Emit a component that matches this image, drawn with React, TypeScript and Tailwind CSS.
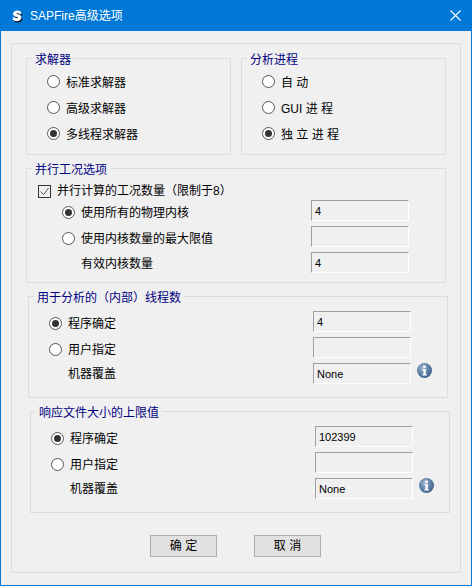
import { type ReactNode } from "react";

const Radio = ({ checked }: { checked?: boolean }) => (
  <span className="flex h-[13px] w-[13px] shrink-0 items-center justify-center rounded-full border border-[#555] bg-white">
    {checked && <span className="h-[7px] w-[7px] rounded-full bg-[#333]" />}
  </span>
);

const RadioRow = ({ label, checked, className }: { label: string; checked?: boolean; className: string }) => (
  <div className={`flex h-[21px] items-center gap-[6px] ${className}`}>
    <Radio checked={checked} />
    <span className="pt-[2px] whitespace-pre">{label}</span>
  </div>
);

const Field = ({ value }: { value?: string }) => (
  <div className="flex h-[21px] w-[98px] items-center border border-t-[#a0a0a0] border-l-[#a0a0a0] border-r-white border-b-white pl-[3px] text-[11px]">
    {value}
  </div>
);

const Group = ({ title, className, children }: { title: string; className: string; children: ReactNode }) => (
  <section className={`relative border border-[#dcdcdc] ${className}`}>
    <h2 className="absolute top-[-7px] left-[5px] bg-[#f0f0f0] px-[3px] text-[12px] leading-[16px] font-normal whitespace-nowrap text-[#000080]">
      {title}
    </h2>
    {children}
  </section>
);

const InfoIcon = () => (
  <svg width="15" height="15" viewBox="0 0 15 15" className="-mt-[6px] ml-[6px] shrink-0">
    <defs>
      <radialGradient id="info" cx="40%" cy="35%" r="70%">
        <stop offset="0%" stopColor="#a5b8cf" />
        <stop offset="55%" stopColor="#5f80a6" />
        <stop offset="100%" stopColor="#3d5f88" />
      </radialGradient>
    </defs>
    <circle cx="7.5" cy="7.5" r="7.5" fill="url(#info)" />
    <rect x="6.2" y="2.5" width="2.6" height="2.4" fill="#fff" />
    <path d="M5.6 6h3.2v5.2h1v1.2H5.4v-1.2h1V7.2h-.8z" fill="#fff" />
  </svg>
);

// one radio group with three rows and text fields on the right
const ThreadRows = ({ first }: { first: string }) => (
  <div className="flex flex-col gap-[5px] pt-[14px] pl-[20px]">
    <div className="flex h-[21px] items-center">
      <RadioRow label="程序确定" checked className="mt-[3px] w-[264px]" />
      <Field value={first} />
    </div>
    <div className="flex h-[21px] items-center">
      <RadioRow label="用户指定" className="mt-[3px] w-[264px]" />
      <Field />
    </div>
    <div className="flex h-[21px] items-center">
      <span className="w-[264px] pl-[19px]">机器覆盖</span>
      <Field value="None" />
      <InfoIcon />
    </div>
  </div>
);

const Button = ({ label }: { label: string }) => (
  <button className="h-[22px] w-[67px] border border-[#adadad] bg-[#e1e1e1] text-[12px] whitespace-pre text-black">{label}</button>
);

export default function App() {
  return (
    <div
      className="flex h-[586px] w-[472px] flex-col border-x border-b border-[#0078d7] bg-[#f0f0f0] text-[12px] leading-[16px] text-black"
      style={{ fontFamily: '"Liberation Sans", "Noto Sans CJK SC", sans-serif' }}
    >
      <header className="-mx-px flex h-[31px] shrink-0 items-center bg-[#0078d7] pr-[11px] pl-[10px] text-white">
        <svg width="14" height="16" viewBox="0 0 14 16" className="mr-[6px]">
          <path d="M11.8 5.6C10.8 4.9 9.6 4.4 8.2 4.4 6.1 4.4 4.5 5.4 4.5 7.2c0 3.3 4.8 2.2 4.8 3.8 0 .7-.7 1-1.6 1-1.2 0-2.4-.5-3.4-1.3v2.4c1 .6 2.2 1 3.5 1 2.4 0 4.1-1.1 4.1-3.2 0-3.4-4.8-2.4-4.8-3.9 0-.6.6-.9 1.4-.9 1 0 2 .4 3.3 1.1z" fill="#0b1a33" stroke="#0b1a33" />
          <path d="M10.8 4.2C9.8 3.5 8.6 3 7.2 3 5.1 3 3.5 4 3.5 5.8c0 3.3 4.8 2.2 4.8 3.8 0 .7-.7 1-1.6 1-1.2 0-2.4-.5-3.4-1.3v2.4c1 .6 2.2 1 3.5 1 2.4 0 4.1-1.1 4.1-3.2 0-3.4-4.8-2.4-4.8-3.9 0-.6.6-.9 1.4-.9 1 0 2 .4 3.3 1.1z" fill="#fff" stroke="#fff" />
        </svg>
        <span className="flex-1">SAPFire高级选项</span>
        <svg width="11" height="11" viewBox="0 0 11 11" stroke="#fff" strokeWidth="1.1">
          <path d="M.5.5l10 10M10.5.5l-10 10" />
        </svg>
      </header>

      <main className="mx-[10px] mt-[12px] mb-[12px] flex flex-1 flex-col border border-[#dcdcdc] pt-[14px]">
        <div className="ml-[14px] flex gap-[10px]">
          <Group title="求解器" className="h-[97px] w-[205px]">
            <div className="flex flex-col gap-[5px] pt-[12px] pl-[20px]">
              <RadioRow label="标准求解器" className="" />
              <RadioRow label="高级求解器" className="" />
              <RadioRow label="多线程求解器" checked className="" />
            </div>
          </Group>
          <Group title="分析进程" className="h-[97px] w-[205px]">
            <div className="flex flex-col gap-[5px] pt-[12px] pl-[20px]">
              <RadioRow label="自 动" className="" />
              <RadioRow label="GUI 进 程" className="" />
              <RadioRow label="独 立 进 程" checked className="" />
            </div>
          </Group>
        </div>

        <Group title="并行工况选项" className="mt-[13px] ml-[14px] h-[115px] w-[420px]">
          <div className="flex flex-col pt-[14px]">
            <div className="flex h-[16px] items-center gap-[6px] pl-[11px]">
              <span className="flex h-[13px] w-[13px] items-center justify-center border border-[#333]">
                <svg width="11" height="11" viewBox="0 0 11 11" fill="none" stroke="#555" strokeWidth="1">
                  <path d="M1.5 5.5l3 3 5-6.5" />
                </svg>
              </span>
              并行计算的工况数量（限制于8）
            </div>
            <div className="mt-[1px] flex flex-col gap-[5px] pl-[35px]">
              <div className="flex h-[21px] items-center">
                <RadioRow label="使用所有的物理内核" checked className="mt-[3px] w-[249px]" />
                <Field value="4" />
              </div>
              <div className="flex h-[21px] items-center">
                <RadioRow label="使用内核数量的最大限值" className="mt-[3px] w-[249px]" />
                <Field />
              </div>
              <div className="flex h-[21px] items-center">
                <span className="mt-[3px] w-[249px] pl-[19px]">有效内核数量</span>
                <Field value="4" />
              </div>
            </div>
          </div>
        </Group>

        <Group title="用于分析的（内部）线程数" className="mt-[13px] ml-[16px] h-[102px] w-[420px]">
          <ThreadRows first="4" />
        </Group>

        <Group title="响应文件大小的上限值" className="mt-[13px] ml-[18px] h-[102px] w-[420px]">
          <ThreadRows first="102399" />
        </Group>

        <div className="mt-[22px] ml-[138px] flex gap-[37px]">
          <Button label="确 定" />
          <Button label="取 消" />
        </div>
      </main>
    </div>
  );
}
